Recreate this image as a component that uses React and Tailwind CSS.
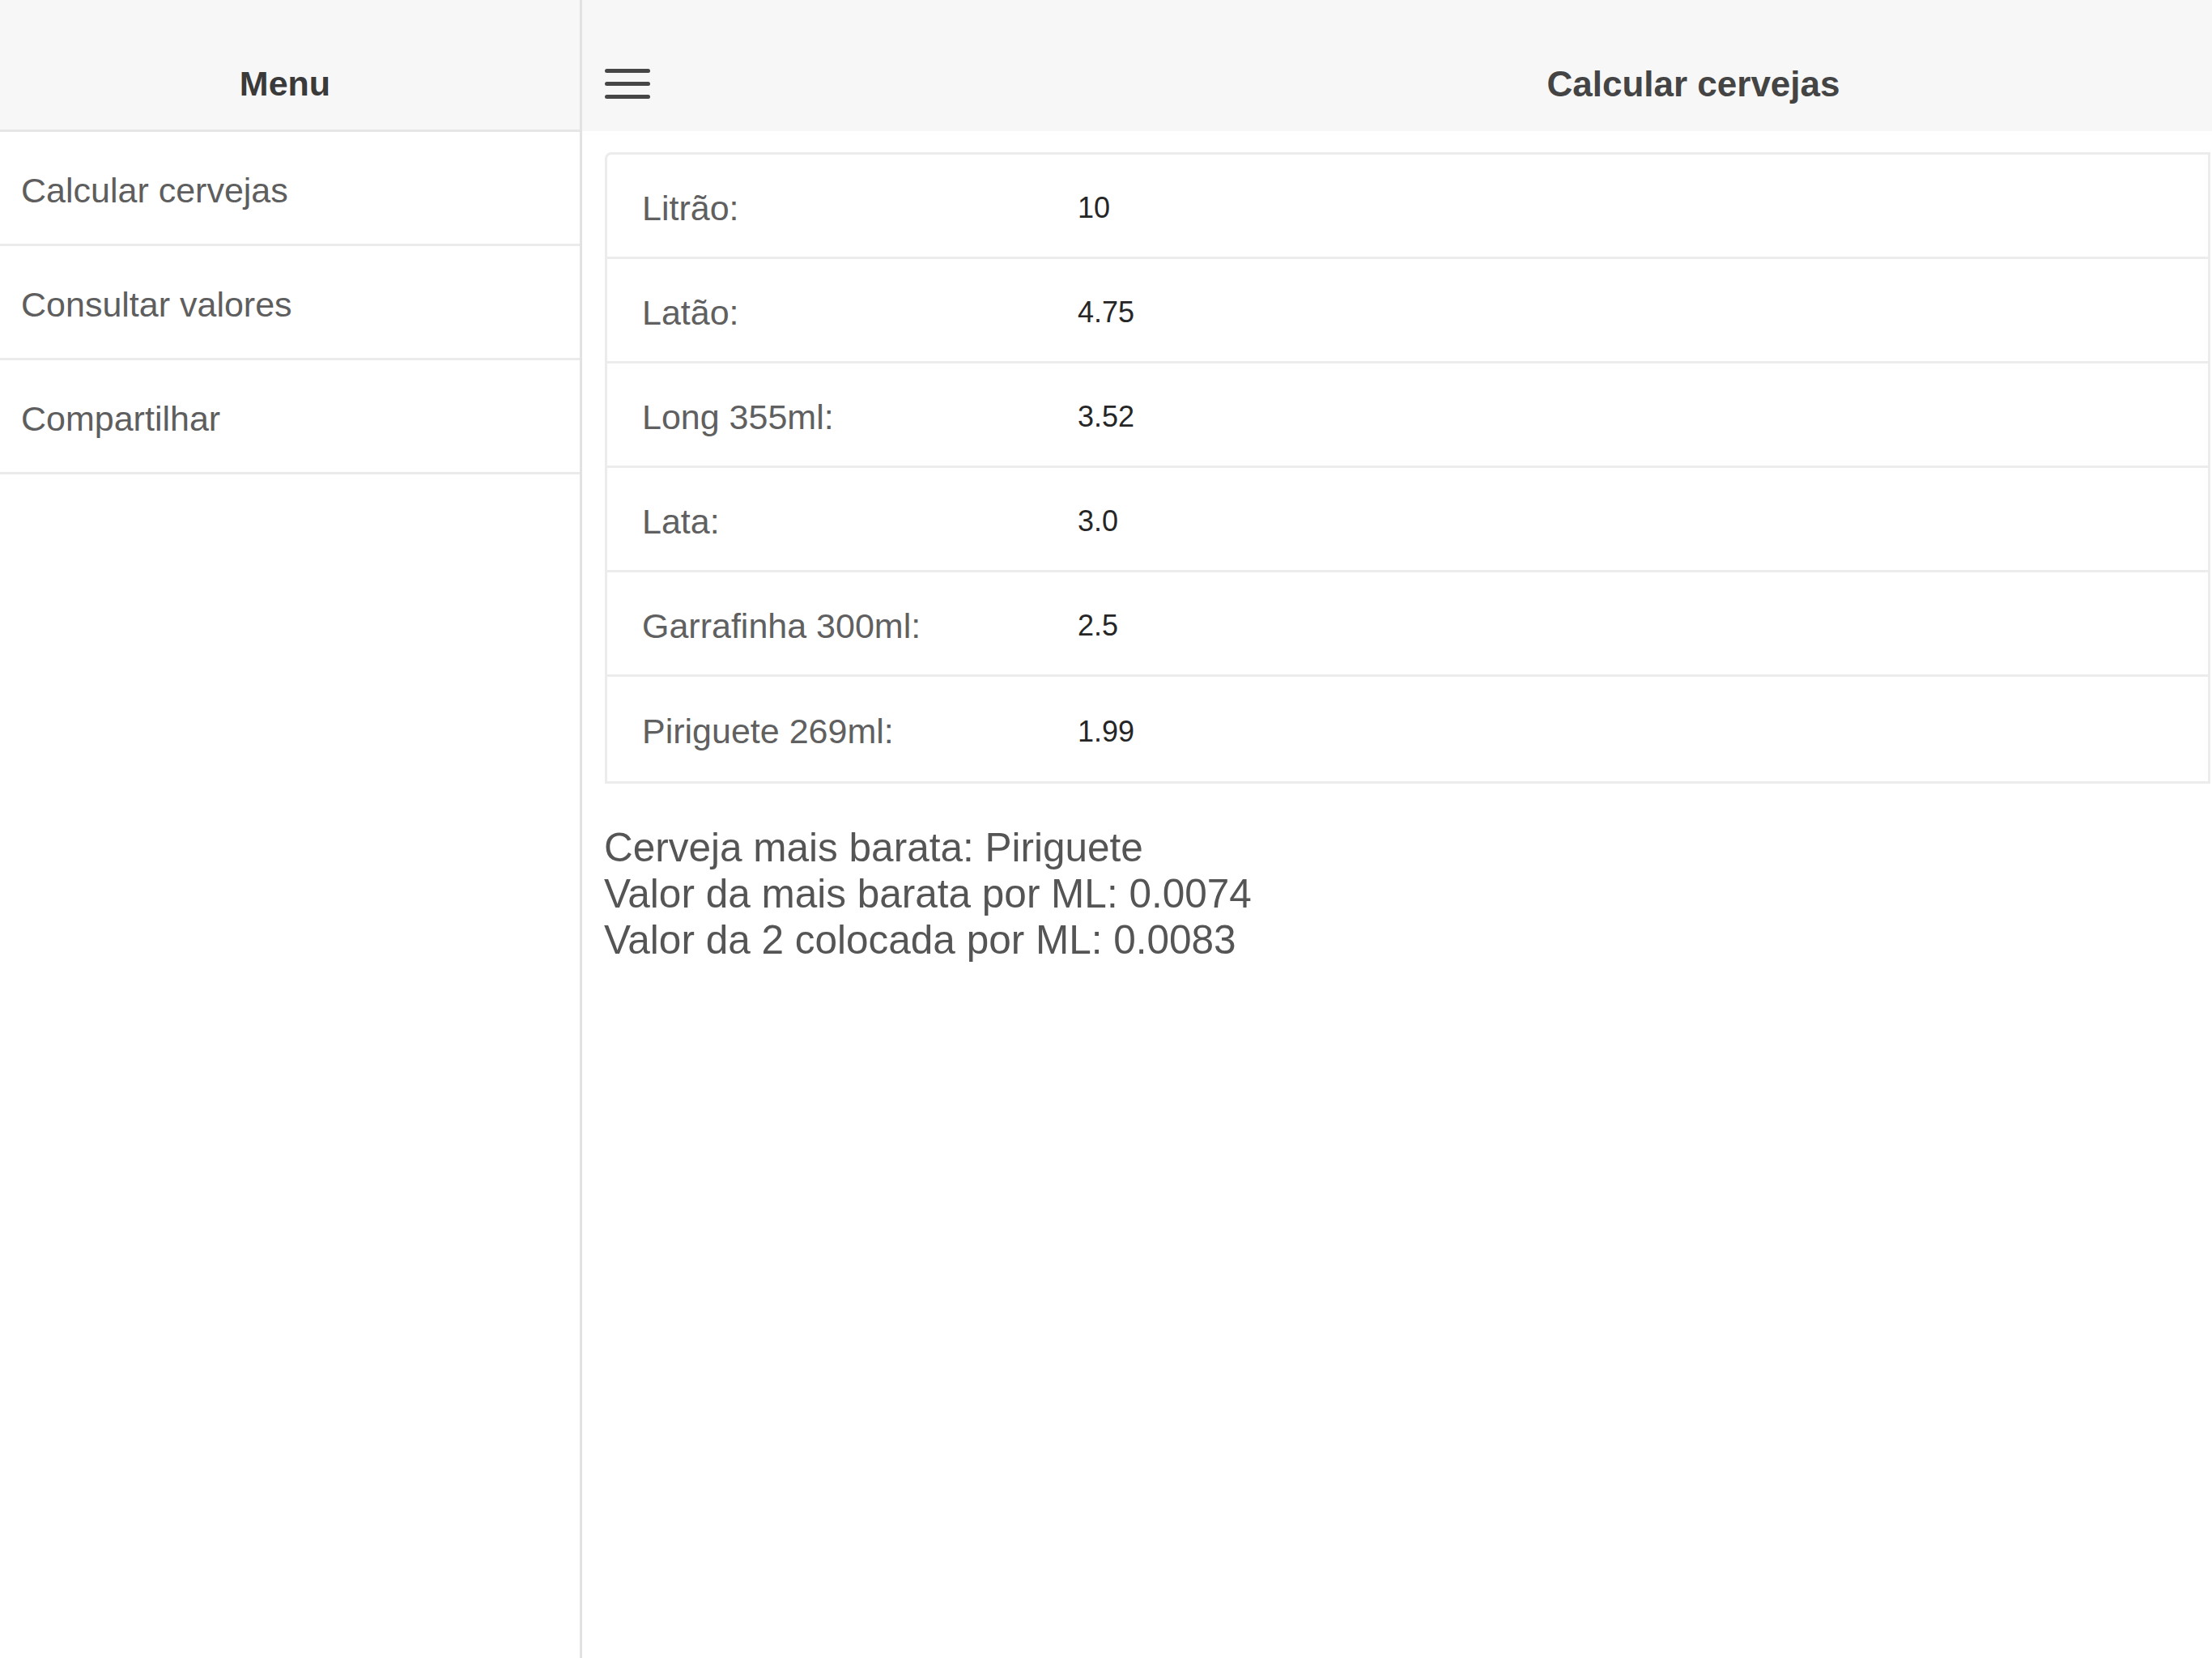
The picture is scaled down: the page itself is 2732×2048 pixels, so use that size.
import React from 'react';

const menuItems = ['Calcular cervejas', 'Consultar valores', 'Compartilhar'];

const beers = [
  { label: 'Litrão:', value: '10' },
  { label: 'Latão:', value: '4.75' },
  { label: 'Long 355ml:', value: '3.52' },
  { label: 'Lata:', value: '3.0' },
  { label: 'Garrafinha 300ml:', value: '2.5' },
  { label: 'Piriguete 269ml:', value: '1.99' },
];

const Hamburger = () => (
  <svg width="56" height="40" viewBox="0 0 56 40" className="block">
    <rect x="0" y="2" width="56" height="5" rx="2.5" fill="#474747" />
    <rect x="0" y="18" width="56" height="5" rx="2.5" fill="#474747" />
    <rect x="0" y="34" width="56" height="5" rx="2.5" fill="#474747" />
  </svg>
);

const Sidebar = () => (
  <aside className="w-[719px] shrink-0 min-h-screen bg-white border-r-[3px] border-[#e2e2e2] flex flex-col">
    <div className="h-[163px] bg-[#f7f7f7] border-b-[3px] border-[#e6e6e6] pt-[46px] pr-[12px] flex items-center justify-center">
      <h2 className="text-[43px] font-bold text-[#3a3a3a]">Menu</h2>
    </div>
    <ul>
      {menuItems.map((item) => (
        <li
          key={item}
          className="h-[141px] border-b-[3px] border-[#ebebeb] flex items-center pl-[26px] pt-[6px] text-[43px] text-[#5e5e5e]"
        >
          {item}
        </li>
      ))}
    </ul>
  </aside>
);

const App = () => {
  return (
    <div className="flex min-h-screen w-[2732px] bg-white font-['Liberation_Sans',Arial,sans-serif]">
      <Sidebar />
      <main className="flex-1 flex flex-col">
        <header className="h-[162px] bg-[#f7f7f7] pt-[44px] flex items-center">
          <button className="ml-[28px] w-[56px]">
            <Hamburger />
          </button>
          <div className="flex-1 text-center pl-[648px] pt-[2px]">
            <h1 className="text-[44px] font-bold text-[#444444]">Calcular cervejas</h1>
          </div>
        </header>

        <div className="ml-[28px] mr-[2px] mt-[26px] border-[3px] border-[#ececec] rounded-tl-[8px] bg-white">
          {beers.map((b, i) => (
            <div
              key={b.label}
              className={`h-[129px] flex items-center pt-[6px] ${i < beers.length - 1 ? 'border-b-[3px] border-[#ececec]' : ''}`}
            >
              <span className="w-[581px] pl-[43px] text-[43px] text-[#606060]">{b.label}</span>
              <span className="text-[36px] text-[#262626]">{b.value}</span>
            </div>
          ))}
        </div>

        <div className="ml-[27px] mt-[50px] text-[49.5px] leading-[57px] text-[#555555]">
          <p>Cerveja mais barata: Piriguete</p>
          <p>Valor da mais barata por ML: 0.0074</p>
          <p>Valor da 2 colocada por ML: 0.0083</p>
        </div>
      </main>
    </div>
  );
};

export default App;
